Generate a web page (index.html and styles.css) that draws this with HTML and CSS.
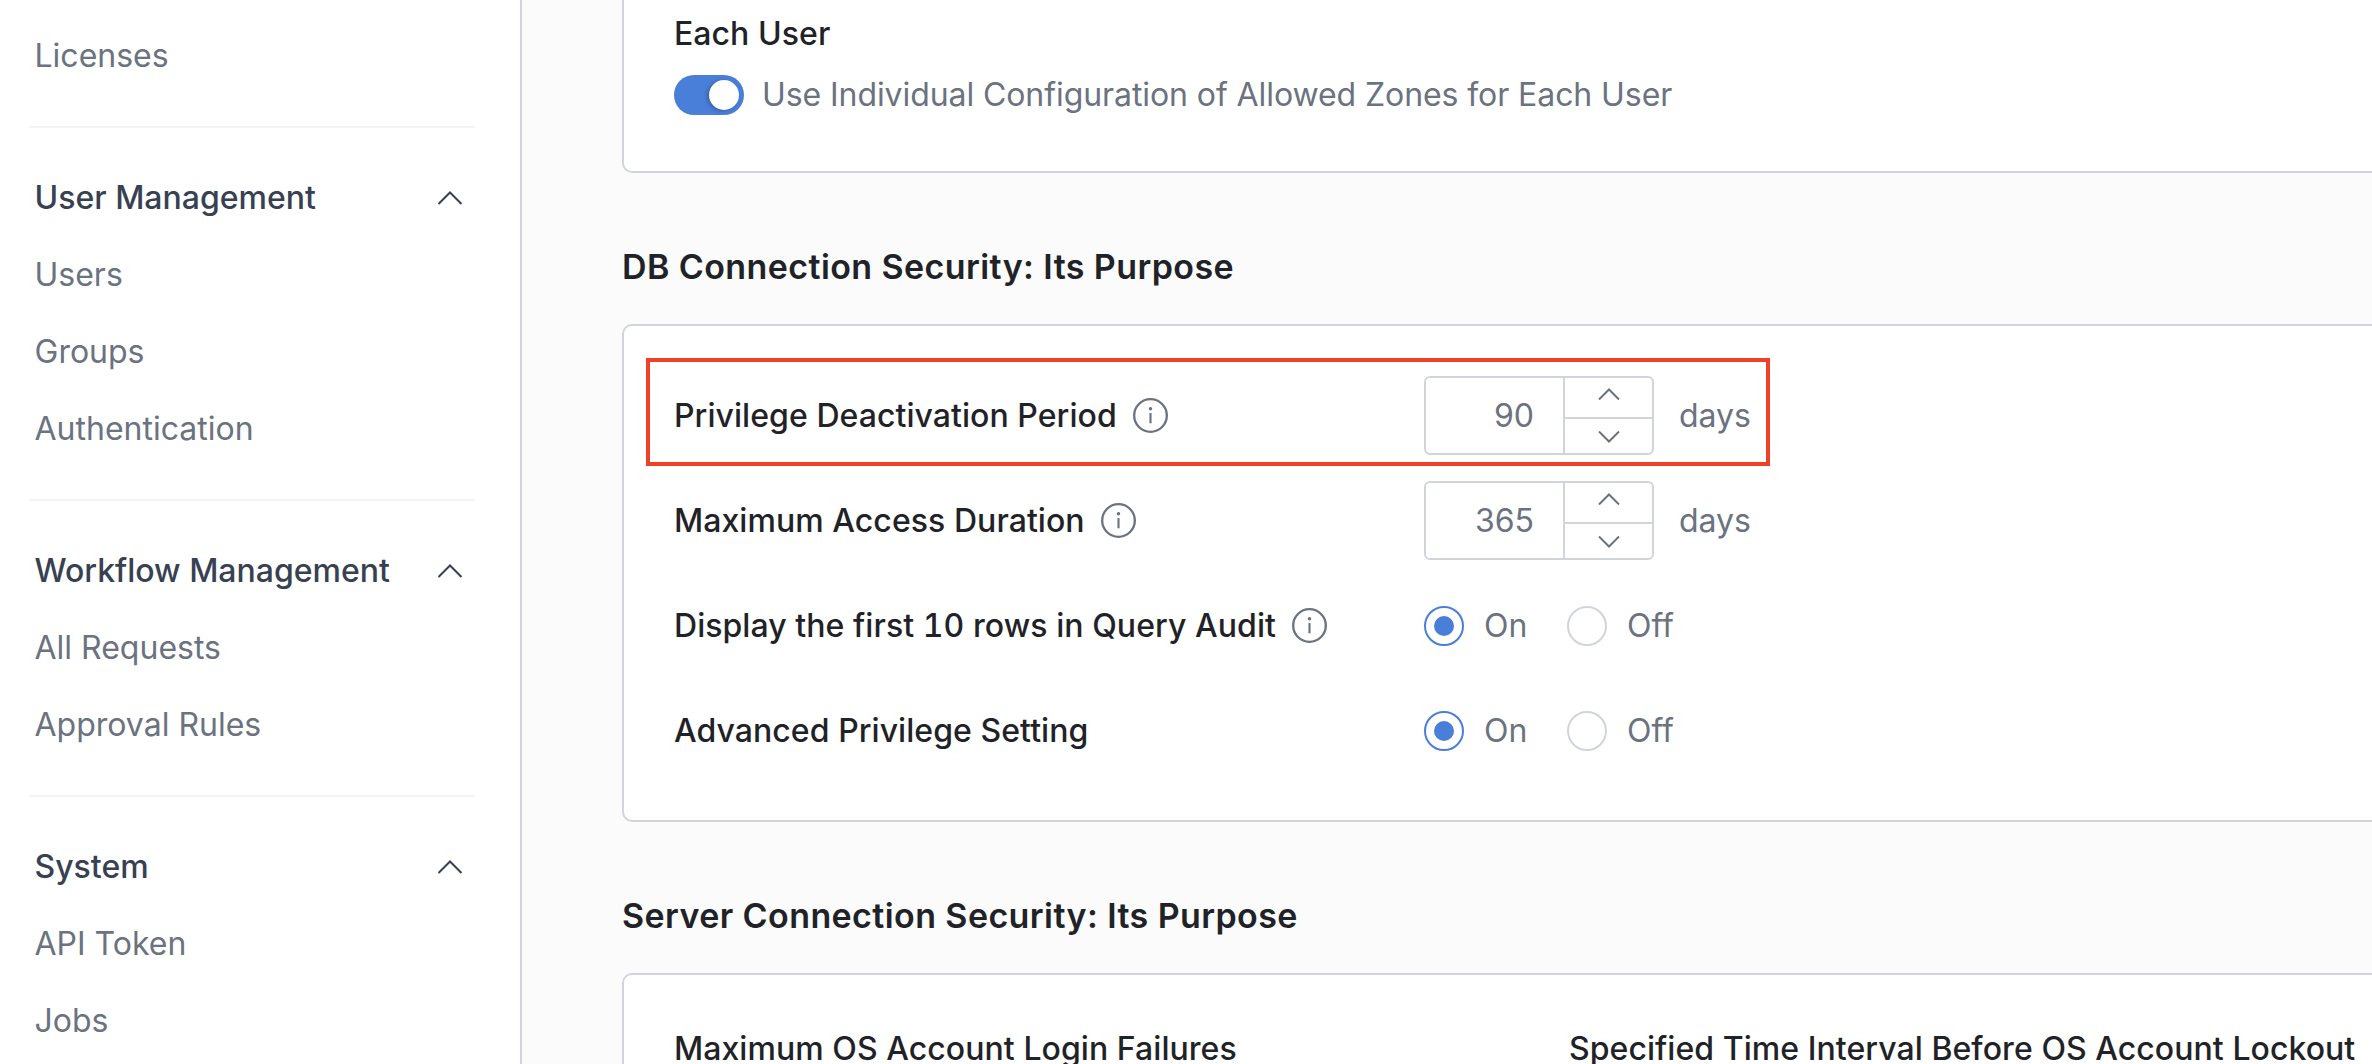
FILE: index.html
```html
<!DOCTYPE html>
<html lang="en">
<head>
  <meta charset="UTF-8" />
  <title>Settings</title>
  <link rel="stylesheet" href="styles.css">
</head>
<body>
  <svg class="icon-defs" width="0" height="0">
    <symbol id="chev-up" viewBox="0 0 26 14"><path d="M1.5 13 L13 1.5 L24.5 13" fill="none" stroke="currentColor" stroke-width="2"/></symbol>
    <symbol id="step-up" viewBox="0 0 22 12"><path d="M1 11.5 L11 1.5 L21 11.5" fill="none" stroke="currentColor" stroke-width="2"/></symbol>
    <symbol id="step-down" viewBox="0 0 22 12"><path d="M1 .5 L11 10.5 L21 .5" fill="none" stroke="currentColor" stroke-width="2"/></symbol>
    <symbol id="info" viewBox="0 0 36 36">
      <circle cx="18" cy="18" r="16.8" fill="none" stroke="currentColor" stroke-width="2.4"/>
      <circle cx="18" cy="11" r="1.8" fill="currentColor"/>
      <path d="M18 15.5 V26" fill="none" stroke="currentColor" stroke-width="2.2"/>
    </symbol>
  </svg>

  <aside class="sidebar">
    <div class="nav-group">
      <div class="nav-item">Licenses</div>
    </div>
    <div class="nav-group">
      <div class="nav-title">User Management <svg class="chev"><use href="#chev-up"/></svg></div>
      <div class="nav-item">Users</div>
      <div class="nav-item">Groups</div>
      <div class="nav-item">Authentication</div>
    </div>
    <div class="nav-group">
      <div class="nav-title">Workflow Management <svg class="chev"><use href="#chev-up"/></svg></div>
      <div class="nav-item">All Requests</div>
      <div class="nav-item">Approval Rules</div>
    </div>
    <div class="nav-group">
      <div class="nav-title">System <svg class="chev"><use href="#chev-up"/></svg></div>
      <div class="nav-item">API Token</div>
      <div class="nav-item">Jobs</div>
    </div>
  </aside>

  <main class="content">
    <section class="card card-zones">
      <div class="field-label">Each User</div>
      <div class="switch-row">
        <span class="switch"><span class="knob"></span></span>
        <span class="muted">Use Individual Configuration of Allowed Zones for Each User</span>
      </div>
    </section>

    <h2 class="section-title">DB Connection Security: Its Purpose</h2>
    <section class="card card-rows">
      <div class="row">
        <div class="highlight"></div>
        <div class="row-label">Privilege Deactivation Period <svg class="info"><use href="#info"/></svg></div>
        <div class="stepper">
          <div class="stepper-value">90</div>
          <div class="stepper-btns">
            <div class="stepper-btn"><svg class="step"><use href="#step-up"/></svg></div>
            <div class="stepper-btn"><svg class="step"><use href="#step-down"/></svg></div>
          </div>
        </div>
        <span class="muted unit">days</span>
      </div>
      <div class="row">
        <div class="row-label">Maximum Access Duration <svg class="info"><use href="#info"/></svg></div>
        <div class="stepper">
          <div class="stepper-value">365</div>
          <div class="stepper-btns">
            <div class="stepper-btn"><svg class="step"><use href="#step-up"/></svg></div>
            <div class="stepper-btn"><svg class="step"><use href="#step-down"/></svg></div>
          </div>
        </div>
        <span class="muted unit">days</span>
      </div>
      <div class="row">
        <div class="row-label">Display the first 10 rows in Query Audit <svg class="info"><use href="#info"/></svg></div>
        <div class="radios">
          <span class="radio checked"></span><span class="muted radio-text">On</span>
          <span class="radio"></span><span class="muted radio-text">Off</span>
        </div>
      </div>
      <div class="row">
        <div class="row-label">Advanced Privilege Setting</div>
        <div class="radios">
          <span class="radio checked"></span><span class="muted radio-text">On</span>
          <span class="radio"></span><span class="muted radio-text">Off</span>
        </div>
      </div>
    </section>

    <h2 class="section-title">Server Connection Security: Its Purpose</h2>
    <section class="card card-server">
      <div class="field-label">Maximum OS Account Login Failures</div>
      <div class="field-label">Specified Time Interval Before OS Account Lockout</div>
    </section>
  </main>
</body>
</html>
```

FILE: styles.css
```css
:root {
  --line: #d1d5db;
  --text: #1f2328;
  --title: #374151;
  --muted: #6b7280;
  --blue: #4a7fd9;
  --red: #ee4125;
}

* {
  box-sizing: border-box;
}

html, body {
  height: 100%;
}

body {
  margin: 0;
  overflow: hidden;
  display: flex;
  font-family: Inter, "Liberation Sans", sans-serif;
  font-size: 32px;
  line-height: 48px;
  color: var(--text);
  background: #fbfbfb;
}

.icon-defs {
  position: absolute;
}

/* sidebar */
.sidebar {
  flex: none;
  width: 522px;
  height: 100%;
  padding: 17px 45px 0 29px;
  background: #fff;
  border-right: 2px solid var(--line);
}

.nav-group {
  padding: 31px 0 32px;
  border-bottom: 2px solid #f3f4f6;
}

.nav-group:first-child {
  padding-top: 0;
}

.nav-group:last-child {
  border-bottom: none;
  padding-bottom: 0;
}

.nav-item, .nav-title {
  height: 77px;
  line-height: 77px;
  padding-left: 5.5px;
}

.nav-item {
  color: var(--muted);
}

.nav-title {
  display: flex;
  align-items: center;
  justify-content: space-between;
  padding-right: 12px;
  font-weight: 500;
  color: var(--title);
}

.chev {
  width: 26px;
  height: 14px;
}

/* main */
.content {
  flex: 1;
  min-width: 0;
  padding-left: 100px;
}

.card {
  background: #fff;
  border: 2px solid var(--line);
  border-right: none;
  border-radius: 10px 0 0 10px;
}

.card-zones {
  border-top: none;
  border-radius: 0 0 0 10px;
  height: 173px;
  padding: 10px 0 0 50px;
}

.field-label, .row-label {
  font-weight: 500;
  letter-spacing: 0.05px;
  font-variant-numeric: tabular-nums;
}

.switch-row {
  display: flex;
  align-items: center;
  gap: 18px;
  margin-top: 17px;
  height: 40px;
  letter-spacing: -0.08px;
}

.muted {
  color: var(--muted);
}

.switch {
  display: flex;
  align-items: center;
  justify-content: flex-end;
  width: 70px;
  height: 40px;
  padding-right: 5px;
  border-radius: 20px;
  background: var(--blue);
}

.knob {
  width: 30px;
  height: 30px;
  border-radius: 50%;
  background: #fff;
  box-shadow: -2px 1px 4px rgba(0, 0, 0, 0.25);
}

.section-title {
  margin: 70px 0 33px;
  font-size: 34px;
  line-height: 48px;
  font-weight: 600;
  letter-spacing: 0.41px;
}

.card-rows {
  padding: 37px 0 37px 50px;
}

.row {
  position: relative;
  display: flex;
  align-items: center;
  height: 105px;
}

.row-label {
  display: flex;
  align-items: center;
  gap: 16px;
  width: 750px;
}

.info {
  width: 35px;
  height: 35px;
  color: var(--muted);
}

/* annotation drawn on top of the first row */
.highlight {
  position: absolute;
  left: -28px;
  top: -5px;
  width: 1124px;
  height: 108px;
  border: 4px solid var(--red);
}

.stepper {
  display: flex;
  width: 230px;
  height: 79px;
  border: 2px solid var(--line);
  border-radius: 6px;
}

.stepper-value {
  width: 137px;
  padding-right: 29px;
  line-height: 75px;
  text-align: right;
  color: var(--muted);
}

.stepper-btns {
  flex: 1;
  display: flex;
  flex-direction: column;
  border-left: 2px solid var(--line);
}

.stepper-btn {
  flex: 1;
  display: flex;
  align-items: center;
  justify-content: center;
  padding-bottom: 6px;
}

.stepper-btn + .stepper-btn {
  padding: 2px 0 0;
  border-top: 2px solid var(--line);
}

.step {
  width: 22px;
  height: 12px;
  color: var(--muted);
}

.unit {
  margin-left: 25px;
}

.radios {
  display: flex;
  align-items: center;
}

.radio {
  display: flex;
  align-items: center;
  justify-content: center;
  width: 40px;
  height: 40px;
  border: 2px solid var(--line);
  border-radius: 50%;
  background: #fff;
}

.radio.checked {
  border-color: var(--blue);
}

.radio.checked::after {
  content: "";
  width: 20px;
  height: 20px;
  border-radius: 50%;
  background: var(--blue);
}

.radio-text {
  margin-left: 20px;
  width: 83px;
}

.card-server {
  display: grid;
  grid-template-columns: 895px 1fr;
  height: 91px;
  padding: 50px 0 0 50px;
  border-bottom: none;
  border-radius: 10px 0 0 0;
  white-space: nowrap;
}
```
